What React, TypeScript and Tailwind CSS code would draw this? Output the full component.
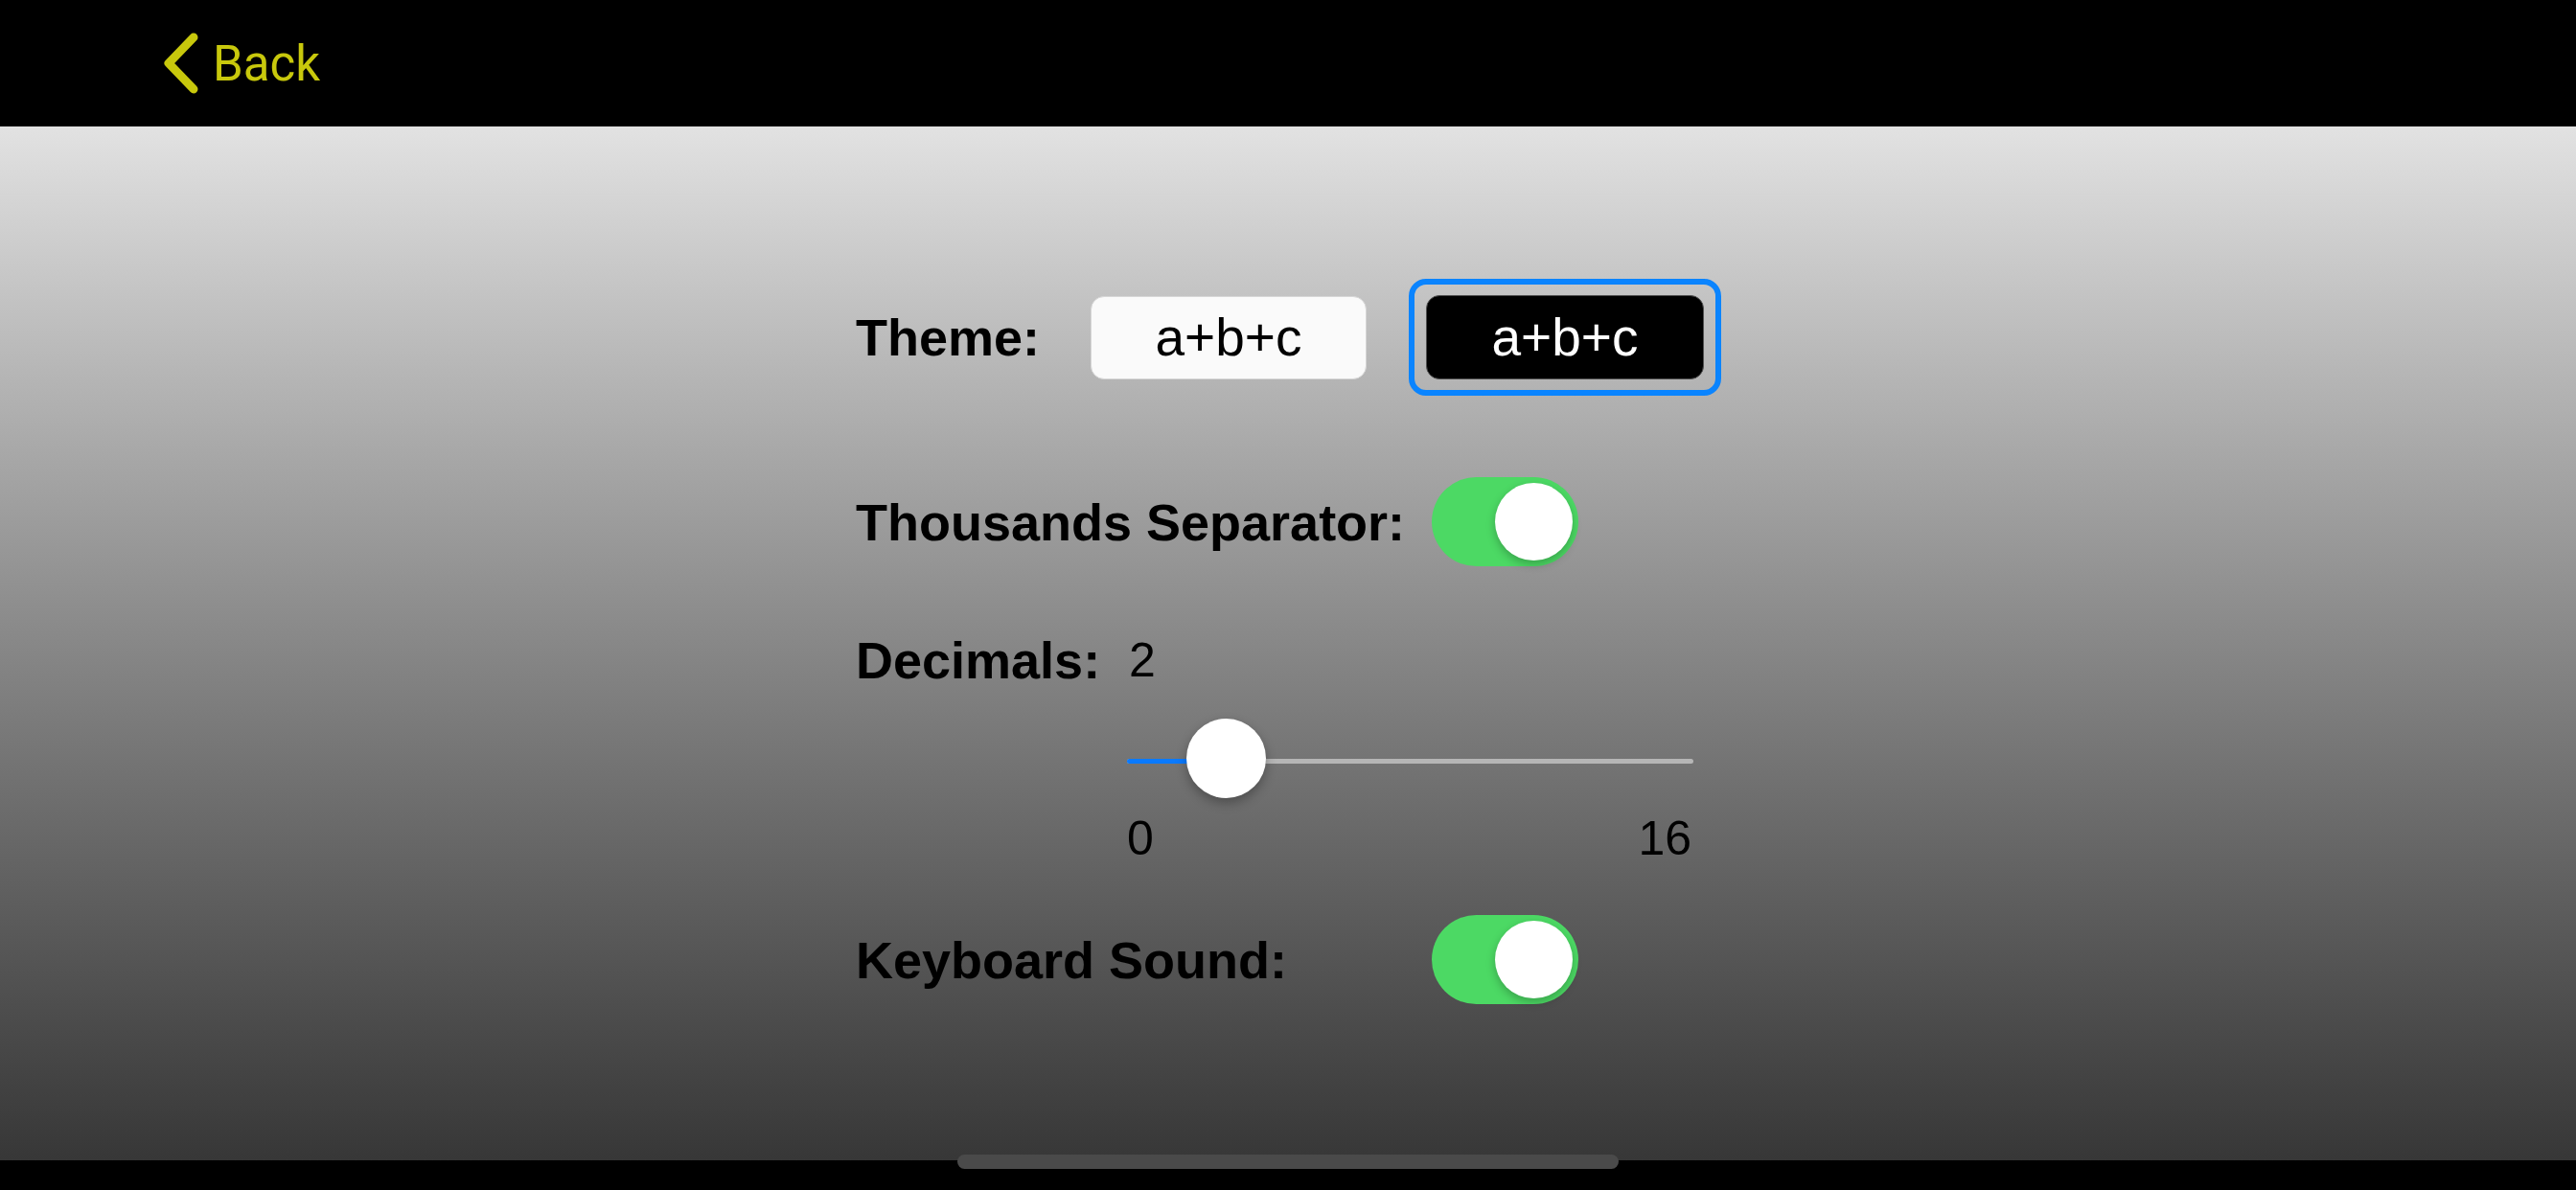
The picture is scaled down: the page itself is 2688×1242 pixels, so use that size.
import React from 'react'

const Toggle = () => (
  <div className="flex h-[93px] w-[153px] items-center justify-end rounded-full bg-[#4cd964] pr-[6px]">
    <div className="h-[81px] w-[81px] rounded-full bg-white shadow-[0_4px_10px_rgba(0,0,0,0.25)]" />
  </div>
)

const Label = ({ text, width }: { text: string; width: string }) => (
  <div className={`${width} shrink-0 text-[54px] font-bold leading-[60px] text-black`}>{text}</div>
)

export default function App() {
  return (
    <div className="relative h-[1242px] w-[2688px] overflow-hidden bg-black font-['Liberation_Sans',Arial,sans-serif]">
      {/* Nav bar */}
      <header className="flex h-[132px] items-center pl-[170px]">
        <svg width="38" height="64" viewBox="0 0 38 64" fill="none">
          <path
            d="M32 5 L6 32 L32 59"
            stroke="#c8c80c"
            strokeWidth="9"
            strokeLinecap="round"
            strokeLinejoin="round"
          />
        </svg>
        <span className="ml-[14px] font-['Roboto',sans-serif] text-[51px] leading-none text-[#c8c80c]">
          Back
        </span>
      </header>

      {/* Settings */}
      <main className="flex h-[1079px] flex-col bg-linear-to-b from-[#e2e2e2] to-[#373737] pl-[893px] pt-[159px]">
        {/* Theme */}
        <div className="flex h-[122px] items-center">
          <Label text="Theme:" width="w-[245px]" />
          <button className="flex h-[87px] w-[288px] items-center justify-center rounded-[14px] border border-[#d6d6d6] bg-[#fafafa] text-[55px] text-black">
            a+b+c
          </button>
          <div className="ml-[44px] rounded-[18px] border-[6px] border-[#0a84ff] px-[12px] py-[11px]">
            <button className="flex h-[88px] w-[290px] items-center justify-center rounded-[14px] border border-[#505050] bg-black text-[55px] text-white">
              a+b+c
            </button>
          </div>
        </div>

        {/* Thousands separator */}
        <div className="mt-[85px] flex items-center">
          <Label text="Thousands Separator:" width="w-[601px]" />
          <Toggle />
        </div>

        {/* Decimals */}
        <div className="mt-[68px] flex h-[60px] items-center">
          <Label text="Decimals:" width="w-[285px]" />
          <span className="text-[50px] leading-[60px] text-black">2</span>
        </div>

        {/* Slider */}
        <div className="relative ml-[283px] mt-[31px] h-[84px] w-[591px]">
          <div className="absolute left-0 right-0 top-[42px] h-[5px] rounded-full bg-[#b6b6b6]" />
          <div className="absolute left-0 top-[42px] h-[5px] w-[103px] rounded-full bg-[#0a7aff]" />
          <div className="absolute left-[62px] top-0 h-[83px] w-[83px] rounded-full bg-white shadow-[0_5px_12px_rgba(0,0,0,0.3)]" />
        </div>
        <div className="ml-[283px] mt-[11px] flex h-[60px] w-[589px] items-center justify-between text-[50px] leading-[60px] text-black">
          <span>0</span>
          <span>16</span>
        </div>

        {/* Keyboard sound */}
        <div className="mt-[50px] flex items-center">
          <Label text="Keyboard Sound:" width="w-[601px]" />
          <Toggle />
        </div>
      </main>

      <div className="h-[31px] bg-black" />

      {/* Home indicator */}
      <div className="absolute left-[999px] top-[1205px] h-[15px] w-[690px] rounded-full bg-[#4a4a4a]" />
    </div>
  )
}
